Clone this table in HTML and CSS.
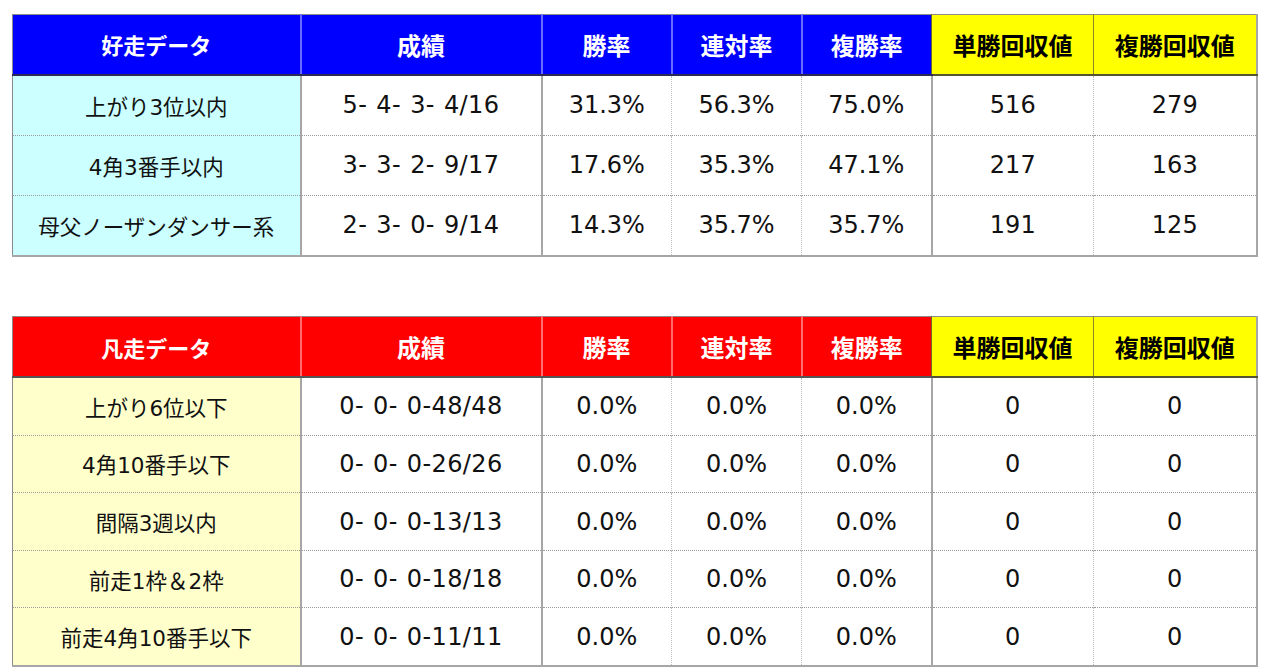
FILE: index.html
```html
<!DOCTYPE html>
<html lang="ja">
<head>
<meta charset="utf-8">
<title>好走データ・凡走データ</title>
<link rel="stylesheet" href="styles.css">
</head>
<body>
<div class="page">
  <table class="stats good">
    <colgroup>
      <col class="c1"><col class="c2"><col class="c3"><col class="c4"><col class="c5"><col class="c6"><col class="c7">
    </colgroup>
    <thead>
      <tr>
        <th class="title">好走データ</th><th class="sep">成績</th><th class="sep">勝率</th><th class="sep">連対率</th><th class="sep">複勝率</th><th class="yel">単勝回収値</th><th class="yel ysep">複勝回収値</th>
      </tr>
    </thead>
    <tbody>
      <tr><td class="label">上がり3位以内</td><td class="solid rec">5- 4- 3- 4/16</td><td class="solid">31.3%</td><td class="dot">56.3%</td><td class="dot">75.0%</td><td class="solid">516</td><td class="dot">279</td></tr>
      <tr><td class="label">4角3番手以内</td><td class="solid rec">3- 3- 2- 9/17</td><td class="solid">17.6%</td><td class="dot">35.3%</td><td class="dot">47.1%</td><td class="solid">217</td><td class="dot">163</td></tr>
      <tr><td class="label">母父ノーザンダンサー系</td><td class="solid rec">2- 3- 0- 9/14</td><td class="solid">14.3%</td><td class="dot">35.7%</td><td class="dot">35.7%</td><td class="solid">191</td><td class="dot">125</td></tr>
    </tbody>
  </table>

  <table class="stats bad">
    <colgroup>
      <col class="c1"><col class="c2"><col class="c3"><col class="c4"><col class="c5"><col class="c6"><col class="c7">
    </colgroup>
    <thead>
      <tr>
        <th class="title">凡走データ</th><th class="sep">成績</th><th class="sep">勝率</th><th class="sep">連対率</th><th class="sep">複勝率</th><th class="yel">単勝回収値</th><th class="yel ysep">複勝回収値</th>
      </tr>
    </thead>
    <tbody>
      <tr><td class="label">上がり6位以下</td><td class="solid rec">0- 0- 0-48/48</td><td class="solid">0.0%</td><td class="dot">0.0%</td><td class="dot">0.0%</td><td class="solid">0</td><td class="dot">0</td></tr>
      <tr><td class="label">4角10番手以下</td><td class="solid rec">0- 0- 0-26/26</td><td class="solid">0.0%</td><td class="dot">0.0%</td><td class="dot">0.0%</td><td class="solid">0</td><td class="dot">0</td></tr>
      <tr><td class="label">間隔3週以内</td><td class="solid rec">0- 0- 0-13/13</td><td class="solid">0.0%</td><td class="dot">0.0%</td><td class="dot">0.0%</td><td class="solid">0</td><td class="dot">0</td></tr>
      <tr><td class="label">前走1枠＆2枠</td><td class="solid rec">0- 0- 0-18/18</td><td class="solid">0.0%</td><td class="dot">0.0%</td><td class="dot">0.0%</td><td class="solid">0</td><td class="dot">0</td></tr>
      <tr><td class="label">前走4角10番手以下</td><td class="solid rec">0- 0- 0-11/11</td><td class="solid">0.0%</td><td class="dot">0.0%</td><td class="dot">0.0%</td><td class="solid">0</td><td class="dot">0</td></tr>
    </tbody>
  </table>
</div>
</body>
</html>
```

FILE: styles.css
```css
html, body {
  margin: 0;
  padding: 0;
  background: #ffffff;
}

.page {
  padding: 14px 0 0 12px;
  display: flex;
  flex-direction: column;
  gap: 59px;
  font-family: "DejaVu Sans", "Noto Sans CJK JP", sans-serif;
}

.stats {
  width: 1245px;
  table-layout: fixed;
  border-collapse: collapse;
  border-top: 1px solid #8c8c8c;
  border-left: 1px solid #8c8c8c;
  border-right: 2px solid #a6a6a6;
  border-bottom: 2px solid #a6a6a6;
}

.c1 { width: 288px; }
.c2 { width: 241px; }
.c3 { width: 130px; }
.c4 { width: 130px; }
.c5 { width: 130px; }
.c6 { width: 162px; }
.c7 { width: 163px; }

.stats th {
  font-family: "Noto Sans CJK JP", "DejaVu Sans", sans-serif;
  font-size: 24px;
  font-weight: bold;
  color: #ffffff;
  text-align: center;
  padding: 0;
  height: 58.5px;
  border-bottom: 2px solid #2b2b55;
}

.bad th { height: 59px; }

.stats th.title { font-size: 22px; }

.good th { background: #0000ff; }
.bad th { background: #ff0000; border-bottom-color: #555555; }

.good th.sep { border-left: 2px solid #6a6aff; }
.bad th.sep { border-left: 2px solid #ff6a6a; }

.stats th.yel {
  background: #ffff00;
  color: #000000;
  border-left: 1px solid #6b6b2a;
  border-bottom-color: #555533;
}
.stats th.ysep { border-left: 1px solid #8a8a22; }

.stats td {
  font-size: 24px;
  color: #111111;
  text-align: center;
  padding: 0;
  border-top: 1px dotted #9a9a9a;
}

.stats td.label { font-size: 21.5px; }
.stats td.rec { letter-spacing: 0.4px; word-spacing: 1px; }

.good td { height: 59.2px; }
.bad td { height: 56.6px; }

.good td.label { background: #ccffff; }
.bad td.label { background: #ffffcc; }

.stats td.solid { border-left: 2px solid #a6a6a6; }
.stats td.dot { border-left: 1px dotted #bdbdbd; }
```
